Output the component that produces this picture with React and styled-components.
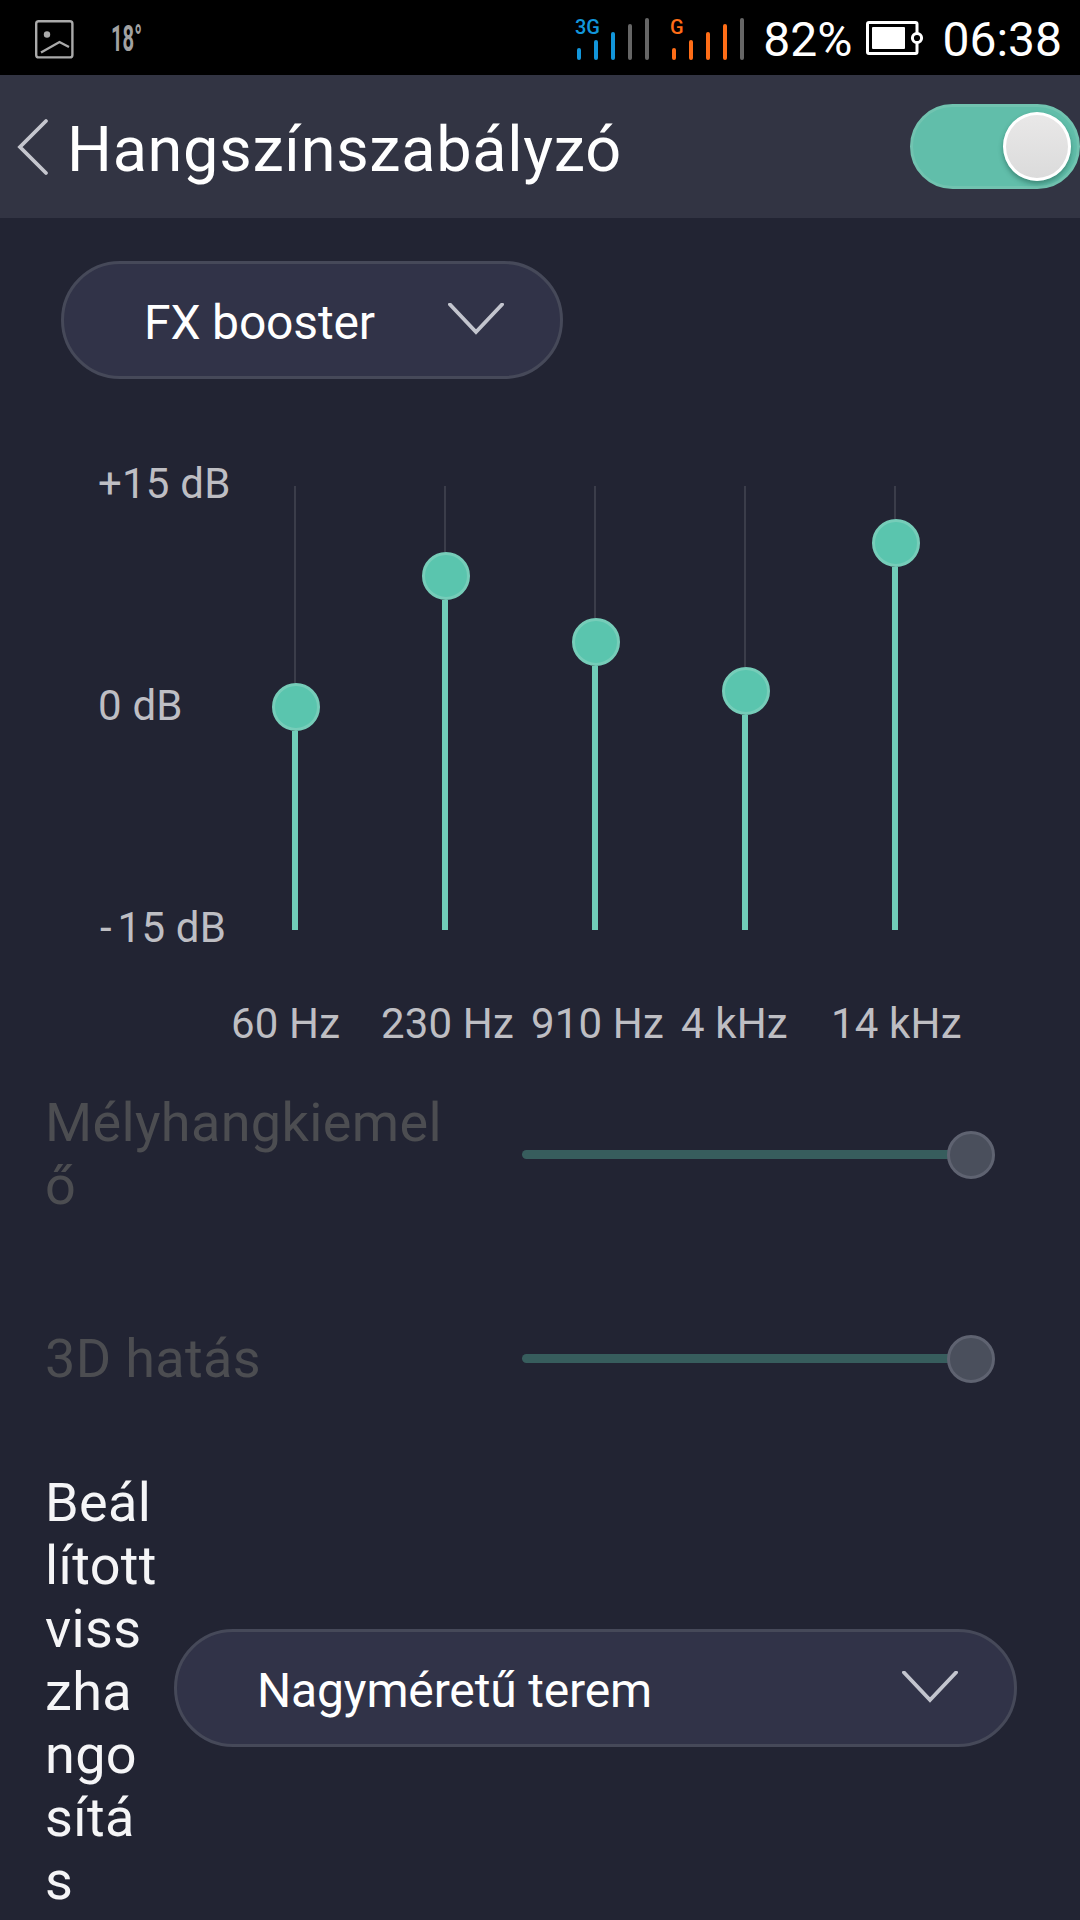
// import packages
import styled, { createGlobalStyle } from 'styled-components'

const BANDS = [
  { label: '60 Hz', level: 223 },
  { label: '230 Hz', level: 354 },
  { label: '910 Hz', level: 288 },
  { label: '4 kHz', level: 239 },
  { label: '14 kHz', level: 387 },
]

const SignalIcon = ({ name, color, active }) => (
  <svg width="76" height="46" viewBox="0 0 76 46">
    <text x="1" y="19" fontSize="20" fontWeight="500" fill={color}>{name}</text>
    {[33, 25, 17, 9, 3].map((top, i) => (
      <path
        key={top}
        d={`M${5 + i * 17} ${top + 2}V43`}
        stroke={i < active ? color : '#666'}
        strokeWidth="4"
        strokeLinecap="round"
      />
    ))}
  </svg>
)

const Chevron = () => (
  <svg width="56" height="34" viewBox="0 0 56 34" fill="none">
    <path d="M2 1.5L28 29L54 1.5" stroke="#c3c5ce" strokeWidth="3.8" strokeLinecap="round" />
  </svg>
)

const App = () => {
  return (
    <>
      <GlobalStyle />
      <Screen>
        <StatusBar>
          <svg width="39" height="39" viewBox="0 0 39 39" fill="none" stroke="#aaa" strokeWidth="2.4">
            <rect x="1.2" y="1.2" width="36.2" height="36.2" rx="2.5" />
            <circle cx="12" cy="14.5" r="3.2" fill="#aaa" stroke="none" />
            <path d="M6 32.5L24.5 22L34 27" />
          </svg>
          <Weather width="64" height="56" viewBox="0 0 64 56">
            <text x="1" y="41" fontSize="36" fontWeight="700" fill="#a2a2a2" textLength="31" lengthAdjust="spacingAndGlyphs">18°</text>
          </Weather>
          <StatusRight>
            <Signals>
              <SignalIcon name="3G" color="#1296db" active={3} />
              <SignalIcon name="G" color="#ff6d17" active={4} />
            </Signals>
            <StatusText>82%</StatusText>
            <Battery width="58" height="36" viewBox="0 0 58 36" fill="none" stroke="#fff">
              <rect x="1.5" y="2.5" width="49.5" height="31" rx="1.5" strokeWidth="3" />
              <rect x="6" y="7" width="33" height="22" rx="1" fill="#fff" stroke="none" />
              <circle cx="51" cy="18" r="4.6" fill="#000" strokeWidth="3" />
            </Battery>
            <StatusText>06:38</StatusText>
          </StatusRight>
        </StatusBar>
        <Header>
          <svg width="32" height="58" viewBox="0 0 32 58" fill="none">
            <path d="M29 3L3 29L29 55" stroke="#c5c6ce" strokeWidth="3.8" strokeLinecap="round" />
          </svg>
          <Title>Hangszínszabályzó</Title>
          <Toggle>
            <Knob />
          </Toggle>
        </Header>
        <Preset>
          <Select $width={502}>
            <span>FX booster</span>
            <Chevron />
          </Select>
        </Preset>
        <Equalizer>
          <Scale>
            <span>+15 dB</span>
            <span>0 dB</span>
            <span><Minus>-</Minus>15 dB</span>
          </Scale>
          <Bands>
            {BANDS.map(({ label, level }) => (
              <Band key={label}>
                <Rail />
                <Thumb />
                <Fill style={{ height: level - 24 }} />
              </Band>
            ))}
          </Bands>
        </Equalizer>
        <Frequencies>
          {BANDS.map(({ label }) => <span key={label}>{label}</span>)}
        </Frequencies>
        <Effects>
          <EffectRow>
            <Label $disabled>{'Mélyhangkiemel\nő'}</Label>
            <Slider>
              <Track />
              <Thumb $disabled />
            </Slider>
          </EffectRow>
          <EffectRow>
            <Label $disabled>3D hatás</Label>
            <Slider>
              <Track />
              <Thumb $disabled />
            </Slider>
          </EffectRow>
        </Effects>
        <ReverbRow>
          <Label>{'Beál\nlított\nviss\nzha\nngo\nsítá\ns'}</Label>
          <Select $width={843}>
            <span>Nagyméretű terem</span>
            <Chevron />
          </Select>
        </ReverbRow>
      </Screen>
    </>
  )
}

export default App

const GlobalStyle = createGlobalStyle`
  * {
    box-sizing: border-box;
  }
  body {
    margin: 0;
    background: #222433;
    font-family: Roboto, sans-serif;
  }
  svg {
    display: block;
    flex: none;
  }
`
const Screen = styled.div`
  display: flex;
  flex-direction: column;
  width: 1080px;
  height: 1920px;
  overflow: hidden;
  background: #222433;
`
const StatusBar = styled.div`
  display: flex;
  align-items: center;
  flex: none;
  height: 75px;
  padding: 4px 18px 0 35px;
  background: #000;
`
const Weather = styled.svg`
  margin: 0 0 4px 36px;
`
const StatusRight = styled.div`
  display: flex;
  align-items: center;
  margin-left: auto;
`
const Signals = styled.div`
  display: flex;
  gap: 19px;
  margin: 0 18px 3px 0;
`
const StatusText = styled.span`
  color: #fff;
  font-size: 48px;
  line-height: 58px;
`
const Battery = styled.svg`
  margin: 0 18px 4px 14px;
`
const Header = styled.header`
  display: flex;
  align-items: center;
  flex: none;
  height: 143px;
  padding-left: 17px;
  background: #323443;
`
const Title = styled.h1`
  margin: 0 auto 0 18px;
  padding-top: 7px;
  color: #fff;
  font-size: 63px;
  font-weight: 400;
  line-height: 74px;
  letter-spacing: .7px;
`
const Toggle = styled.div`
  display: flex;
  align-items: center;
  justify-content: flex-end;
  width: 170px;
  height: 85px;
  padding-right: 6px;
  border: 3px solid #71c3b0;
  border-radius: 43px;
  background: #61beaa;
`
const Knob = styled.div`
  width: 68px;
  height: 69px;
  border: 3px solid #fff;
  border-radius: 50%;
  background: linear-gradient(#e9e8e8, #dbdbdb);
  box-shadow: 0 3px 5px rgba(20, 70, 60, .45);
`
const Preset = styled.div`
  padding: 43px 0 0 61px;
`
const Select = styled.div`
  display: flex;
  align-items: center;
  justify-content: space-between;
  flex: none;
  width: ${({ $width }) => $width}px;
  height: 118px;
  padding: 0 56px 0 80px;
  border: 3px solid #464959;
  border-radius: 59px;
  background: #313348;
  color: #fff;
  font-size: 48px;
  line-height: 56px;
  letter-spacing: -.15px;

  span {
    padding-top: 6px;
  }
`
const Equalizer = styled.div`
  display: flex;
  margin-top: 83px;
  padding-left: 98px;
`
const Scale = styled.div`
  display: flex;
  flex-direction: column;
  justify-content: space-between;
  width: 122px;
  height: 488px;
  color: #bebec3;
  font-size: 42px;
  line-height: 44px;
  letter-spacing: .2px;
  white-space: nowrap;
`
const Minus = styled.span`
  margin-left: 2px;
  letter-spacing: 6px;
`
const Bands = styled.div`
  display: grid;
  grid-template-columns: repeat(5, 150px);
  height: 444px;
  margin-top: 24px;
`
const Band = styled.div`
  display: flex;
  flex-direction: column;
  align-items: center;
`
const Rail = styled.div`
  flex: 1;
  width: 2px;
  background: #3b3d4a;
`
const Thumb = styled.div`
  flex: none;
  width: 48px;
  height: 48px;
  margin-right: -1px;
  margin-top: ${({ $disabled }) => ($disabled ? '2px' : 0)};
  border: 3px solid ${({ $disabled }) => ($disabled ? '#5f6371' : '#76cdb9')};
  border-radius: 50%;
  background: ${({ $disabled }) => ($disabled ? '#4a4f5c' : '#5ac5ae')};
`
const Fill = styled.div`
  flex: none;
  width: 6px;
  background: #70cdb8;
`
const Frequencies = styled.div`
  display: grid;
  grid-template-columns: repeat(5, 150px);
  margin-top: 52px;
  padding-left: 231px;
  color: #bebec3;
  font-size: 42px;
  line-height: 44px;
  letter-spacing: .15px;
  white-space: nowrap;
`
const Effects = styled.div`
  margin-top: 6px;
`
const EffectRow = styled.div`
  display: flex;
  align-items: center;
  height: 204px;
  padding-left: 45px;
`
const Label = styled.div`
  flex: 1;
  color: ${({ $disabled }) => ($disabled ? '#4c4d51' : '#f5f5f7')};
  font-size: 54px;
  line-height: 63px;
  letter-spacing: .35px;
  white-space: pre-line;
`
const Slider = styled.div`
  display: flex;
  align-items: center;
  width: 472px;
  margin-right: 86px;
`
const Track = styled.div`
  flex: 1;
  height: 9px;
  margin-right: -2px;
  border-radius: 5px 0 0 5px;
  background: #375d5d;
`
const ReverbRow = styled.div`
  display: flex;
  align-items: center;
  margin-top: 11px;
  padding: 0 63px 0 45px;

  ${Select} {
    margin-bottom: 8px;
  }
`
